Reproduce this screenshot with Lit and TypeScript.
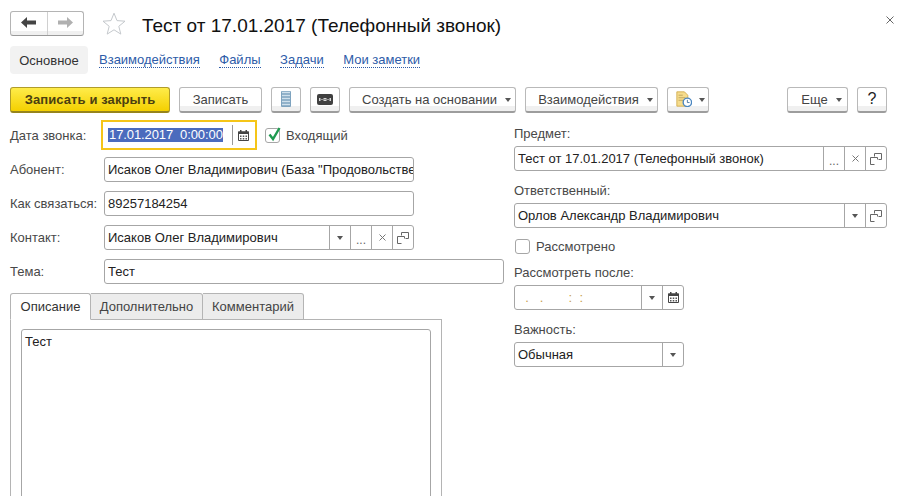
import { LitElement, html, css, svg } from "lit";
import { customElement } from "lit/decorators.js";

const caret = html`<svg class="caret" width="6" height="4" viewBox="0 0 6 4"><path d="M0 0h6L3 4z" fill="#555"/></svg>`;
const calendar = html`<svg width="11" height="11" viewBox="0 0 11 11"><path d="M0.5 2h10v8.5h-10z" fill="#fff" stroke="#444"/><path d="M0 1.5h11V4H0zM2 0h1.5v2H2zM7.5 0H9v2H7.5z" fill="#444"/><path d="M2 5.5h1.5V7H2zM4.75 5.5h1.5V7h-1.5zM7.5 5.5H9V7H7.5zM2 8h1.5v1.5H2zM4.75 8h1.5v1.5h-1.5zM7.5 8H9v1.5H7.5z" fill="#555"/></svg>`;
const openIco = html`<svg width="12" height="12" viewBox="0 0 12 12" fill="none" stroke="#666"><path d="M4.5 3.5v-3h7v6h-3"/><path d="M0.5 4.5h7v2M0.5 4.5v7h4"/></svg>`;
const clearIco = html`<svg width="7" height="7" viewBox="0 0 7 7" stroke="#777" stroke-width="1"><path d="M0.5 0.5l6 6M6.5 0.5l-6 6"/></svg>`;
const dots = html`<span class="dots">...</span>`;

type Cell = "caret" | "dots" | "clear" | "open" | "cal";
const cells: Record<Cell, unknown> = { caret, dots, clear: clearIco, open: openIco, cal: calendar };

@customElement("app-root")
export class AppRoot extends LitElement {
  static styles = css`
    :host {
      display: block;
      width: 905px;
      height: 496px;
      overflow: hidden;
      background: #fff;
      font-family: "Liberation Sans", Arial, sans-serif;
      font-size: 13px;
      color: #3d3d3d;
      box-sizing: border-box;
      position: relative;
    }
    * { box-sizing: border-box; }
    .page { display: flex; flex-direction: column; padding: 11px 18px 0 10px; }

    .head { display: flex; align-items: center; height: 24px; }
    .nav {
      width: 74px; height: 25px; display: flex;
      border: 1px solid #b4b4b4; border-bottom-color: #999; border-radius: 3px;
      background: linear-gradient(#fff 0, #fff 19px, #f0f0f0 19px);
    }
    .nav span { flex: 1; display: flex; align-items: center; justify-content: center; padding-bottom: 2px; }
    .nav span + span { border-left: 1px solid #d0d0d0; }
    .star { margin-left: 18px; display: flex; margin-top: 1px; }
    .title { margin-left: 16px; margin-top: 5px; font-size: 19px; color: #111; white-space: nowrap; }
    .close { margin-left: auto; margin-right: -7px; margin-top: -6px; display: flex; }

    .tabs { display: flex; align-items: center; margin-top: 11px; height: 28px; }
    .tab-cur {
      width: 78px; height: 28px; background: #f2f2f2; border-radius: 4px;
      display: flex; align-items: center; justify-content: center; color: #333;
    }
    .link {
      color: #2d5ba8; line-height: 14px; border-bottom: 1px dotted #2d5ba8; white-space: nowrap;
    }
    .links { display: flex; margin-left: 11px; gap: 19.5px; }

    .bar { display: flex; margin-top: 13px; height: 26px; gap: 9px; }
    .btn {
      height: 26px; display: flex; align-items: center; justify-content: center;
      border: 1px solid #b9b9b9; border-bottom: 2px solid #9d9d9d; border-radius: 3px;
      background: linear-gradient(#fff 0, #fff 18px, #f0f0f0 18px);
      color: #444; white-space: nowrap; padding-bottom: 1px;
    }
    .btn .caret { margin-left: 8px; margin-top: 2px; margin-right: -8px; }
    .btn.ico { padding-left: 4px; }
    .btn.ico .caret { margin-left: 7px; margin-right: 0; }
    .primary {
      font-weight: bold; color: #4b3f10; letter-spacing: 0.1px;
      border-color: #b09c2a; border-bottom-color: #96841c;
      background: linear-gradient(#ffec4a, #f4d000);
    }
    .help { font-size: 16px; color: #222; }
    .spacer { flex: 1; }

    .form { display: flex; margin-top: 7px; }
    .left { width: 494px; flex: none; display: flex; flex-direction: column; }
    .right { width: 373px; margin-left: 10px; flex: none; display: flex; flex-direction: column; padding-top: 6px; }

    .row { display: flex; align-items: center; height: 25px; margin-bottom: 9px; }
    .label { width: 94px; flex: none; white-space: nowrap; color: #484848; }
    .row.first { height: 30px; margin-bottom: 7px; }
    .w310 { width: 310px; display: flex; }

    .field {
      height: 25px; flex: 1; min-width: 0; display: flex; align-items: stretch;
      border: 1px solid #a6a6a6; border-radius: 3px; background: #fff;
      color: #222;
    }
    .val { flex: 1; min-width: 0; padding-left: 3px; line-height: 23px; white-space: nowrap; overflow: hidden; }
    .cell {
      width: 21px; flex: none; border-left: 1px solid #a6a6a6;
      display: flex; align-items: center; justify-content: center;
    }
    .dots { color: #666; margin-top: 5px; font-size: 12px; }

    .focus {
      width: 156px; height: 30px; margin-left: -3px; flex: none; display: flex; align-items: center;
      border: 2px solid #f5c518; padding-left: 5px; color: #fff;
    }
    .sel { background: #4b6bbd; width: 115px; height: 14px; line-height: 14px; white-space: nowrap; padding-left: 1px; letter-spacing: -0.1px; }
    .focus i { width: 1px; height: 20px; background: #999; margin-left: 9px; }
    .focus b { margin-left: 5px; display: flex; }

    .check { display: flex; align-items: center; color: #484848; }
    .box {
      width: 15px; height: 15px; border: 1px solid #a6a6a6; border-radius: 3px; background: #fff;
      position: relative; flex: none; margin-right: 6px;
    }
    .box svg { position: absolute; left: 1px; top: -3px; }
    .check.in { margin-left: 8px; }
    .check.rev { margin-left: 1px; height: 15px; margin-top: 11px; margin-bottom: -1px; }

    .lab2 { height: 15px; line-height: 15px; color: #484848; margin-bottom: 5px; }
    .right .field { flex: none; }
    .gap { margin-top: 12px; }
    .narrow { width: 170px; }
    .mask { color: #c8a050; }

    .ptabs { display: flex; height: 27px; position: relative; z-index: 1; }
    .ptab {
      height: 27px; display: flex; align-items: center; justify-content: center;
      border: 1px solid #b4b4b4; border-left: 0; border-radius: 0 3px 0 0; background: #ececec; color: #444;
    }
    .ptab.on {
      background: #fff; border-left: 1px solid #b4b4b4; border-bottom-color: #fff; border-radius: 3px 3px 0 0; color: #333;
    }
    .panel {
      width: 432px; height: 200px; border: 1px solid #b4b4b4; border-bottom: 0; margin-top: -1px;
      padding: 9px 10px 0;
    }
    .area {
      height: 200px; border: 1px solid #a6a6a6; border-radius: 3px; padding: 4px 3px; color: #222;
    }
  `;

  private field(value: unknown, list: Cell[], extra = "") {
    return html`<div class="field ${extra}">
      <div class="val">${value}</div>
      ${list.map((c) => html`<div class="cell">${cells[c]}</div>`)}
    </div>`;
  }

  private btn(label: unknown, width: number, hasCaret = false, cls = "") {
    return html`<div class="btn ${cls}" style="width:${width}px">${label}${hasCaret ? caret : ""}</div>`;
  }

  render() {
    const arrow = (d: string, c: string) => svg`<path d=${d} fill=${c}/>`;
    return html`<div class="page">
      <div class="head">
        <div class="nav">
          <span><svg width="15" height="11" viewBox="0 0 15 11">${arrow("M0 5.5L6 0v3.5h9v4H6V11z", "#444")}</svg></span>
          <span><svg width="15" height="11" viewBox="0 0 15 11">${arrow("M15 5.5L9 0v3.5H0v4h9V11z", "#b0b0b0")}</svg></span>
        </div>
        <div class="star">
          <svg width="24" height="23" viewBox="0 0 24 23"><path d="M12 1.2l3 7.4 8 .6-6.2 5.1 2 7.8L12 17.8l-6.8 4.3 2-7.8L1 9.2l8-.6z" fill="#fff" stroke="#c4c8cc"/></svg>
        </div>
        <div class="title">Тест от 17.01.2017 (Телефонный звонок)</div>
        <div class="close">
          <svg width="8" height="8" viewBox="0 0 8 8" stroke="#666"><path d="M0.5 0.5l7 7M7.5 0.5l-7 7"/></svg>
        </div>
      </div>

      <div class="tabs">
        <div class="tab-cur">Основное</div>
        <div class="links">
          <span class="link">Взаимодействия</span>
          <span class="link">Файлы</span>
          <span class="link">Задачи</span>
          <span class="link">Мои заметки</span>
        </div>
      </div>

      <div class="bar">
        ${this.btn("Записать и закрыть", 160, false, "primary")}
        ${this.btn("Записать", 83)}
        <div class="btn" style="width:30px">
          <svg width="10" height="16" viewBox="0 0 10 16">
            <rect width="10" height="16" rx="1" fill="#7ea3bf"/>
            <path d="M1 1.5h8M1 4.5h8M1 7.5h8M1 10.5h8M1 13.5h8" stroke="#cfe0ec" stroke-width="1.3"/>
          </svg>
        </div>
        <div class="btn" style="width:30px">
          <svg width="16" height="11" viewBox="0 0 16 11">
            <rect width="16" height="11" rx="2" fill="#404040"/>
            <path d="M2 4h1.5v3H2zM6.5 4h3v3h-3zM12.5 4H14v3h-1.5z" fill="#d8d8d8"/>
            <path d="M7.5 5h1v1h-1z" fill="#404040"/>
            <path d="M4 5.5h2M10 5.5h2" stroke="#999"/>
          </svg>
        </div>
        ${this.btn("Создать на основании", 167, true)}
        ${this.btn("Взаимодействия", 133, true)}
        <div class="btn ico" style="width:42px">
          <svg width="16" height="16" viewBox="0 0 19 19">
            <path d="M1 1h9l4 4v13H1z" fill="#f6dc8c" stroke="#cfa94a"/>
            <path d="M3 5h5M3 8h8M3 11h6" stroke="#b9a05a"/>
            <circle cx="13.5" cy="13.5" r="5" fill="#fff" stroke="#4a86c0" stroke-width="1.6"/>
            <path d="M13.5 10.5v3.2h2.6" stroke="#37699b" fill="none"/>
          </svg>${caret}
        </div>
        <div class="spacer"></div>
        ${this.btn("Еще", 61, true)}
        ${this.btn("?", 30, false, "help")}
      </div>

      <div class="form">
        <div class="left">
          <div class="row first">
            <div class="label">Дата звонка:</div>
            <div class="focus">
              <div class="sel">17.01.2017&nbsp;&nbsp;0:00:00</div>
              <i></i>
              <b>${calendar}</b>
            </div>
            <div class="check in">
              <div class="box">
                <svg width="15" height="16" viewBox="0 0 15 16"><path d="M2.5 8.5l3.5 4.5 6.5-11" fill="none" stroke="#1f9a50" stroke-width="2.4"/></svg>
              </div>
              Входящий
            </div>
          </div>
          <div class="row"><div class="label">Абонент:</div><div class="w310">${this.field('Исаков Олег Владимирович (База "Продовольственные товары")', [])}</div></div>
          <div class="row"><div class="label">Как связаться:</div><div class="w310">${this.field("89257184254", [])}</div></div>
          <div class="row"><div class="label">Контакт:</div><div class="w310">${this.field("Исаков Олег Владимирович", ["caret", "dots", "clear", "open"])}</div></div>
          <div class="row"><div class="label">Тема:</div>${this.field("Тест", [])}</div>
          <div class="ptabs">
            <div class="ptab on" style="width:81px">Описание</div>
            <div class="ptab" style="width:112px">Дополнительно</div>
            <div class="ptab" style="width:101px">Комментарий</div>
          </div>
          <div class="panel"><div class="area">Тест</div></div>
        </div>

        <div class="right">
          <div class="lab2">Предмет:</div>
          ${this.field("Тест от 17.01.2017 (Телефонный звонок)", ["dots", "clear", "open"])}
          <div class="lab2 gap">Ответственный:</div>
          ${this.field("Орлов Александр Владимирович", ["caret", "open"])}
          <div class="check rev"><div class="box"></div>Рассмотрено</div>
          <div class="lab2 gap">Рассмотреть после:</div>
          ${this.field(html`<span class="mask">&nbsp;&nbsp;.&nbsp;&nbsp;&nbsp;.&nbsp;&nbsp;&nbsp;&nbsp;&nbsp;&nbsp;&nbsp;:&nbsp;&nbsp;:</span>`, ["caret", "cal"], "narrow")}
          <div class="lab2 gap">Важность:</div>
          ${this.field("Обычная", ["caret"], "narrow")}
        </div>
      </div>
    </div>`;
  }
}
